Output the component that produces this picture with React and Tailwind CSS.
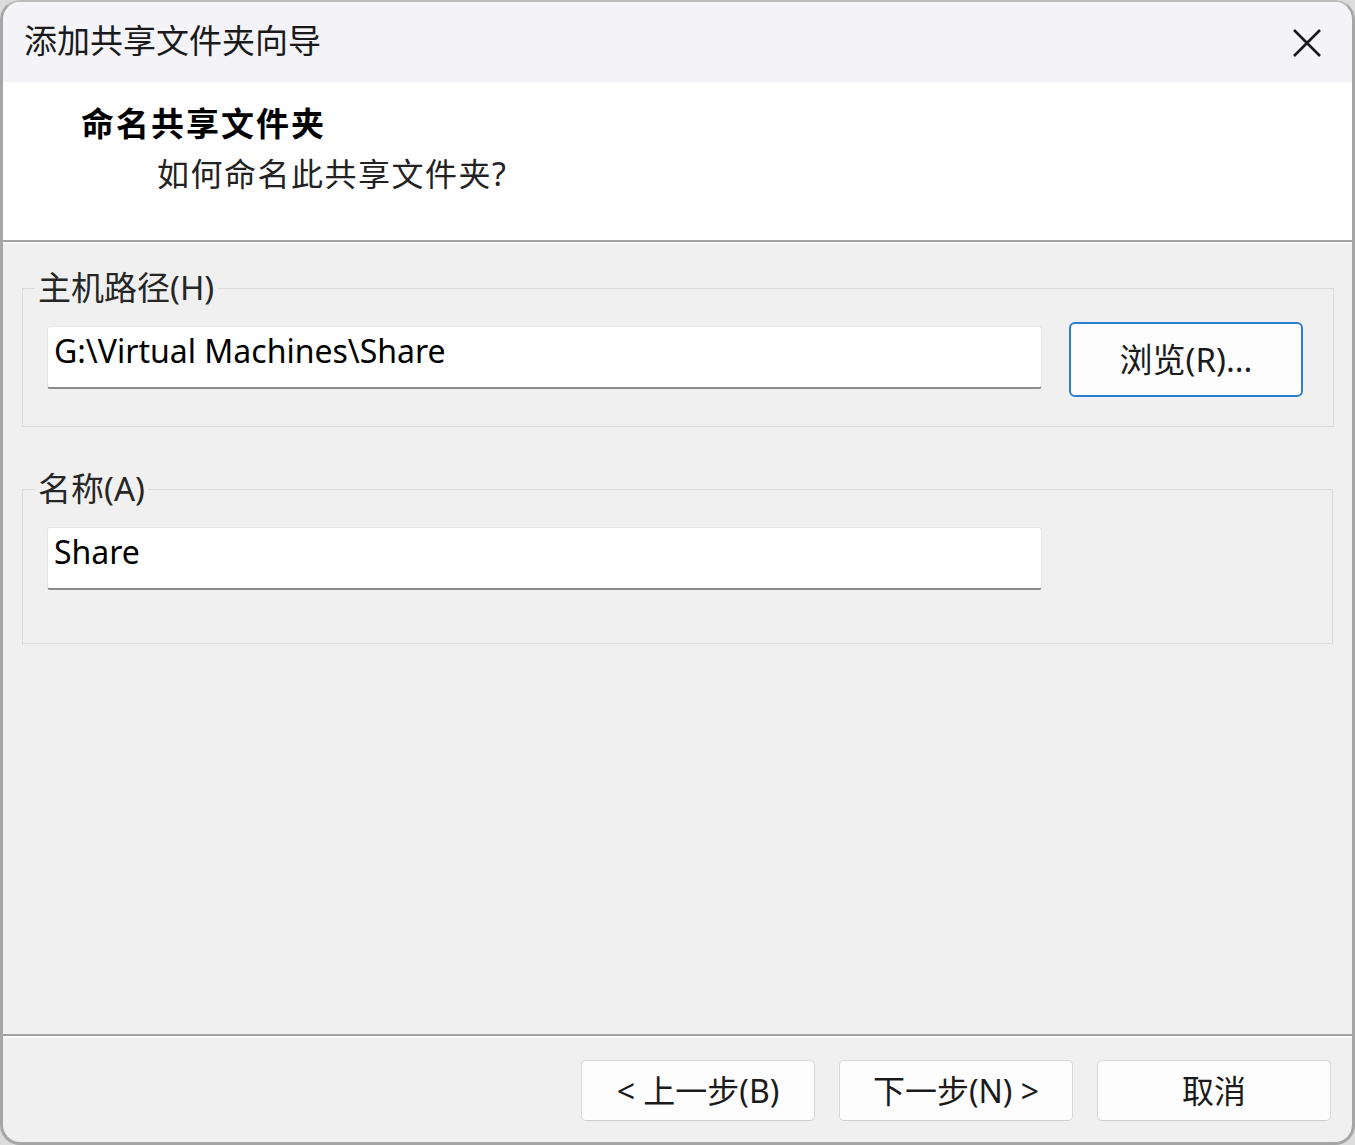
import { useState } from 'react';

const ui = "font-['Noto_Sans','Noto_Sans_CJK_SC',sans-serif]";

function GroupBox({ label, className, innerClass, children }) {
  return (
    <fieldset className={`border border-[#dadada] ${className}`}>
      <legend className="ml-[12px] px-[3px] text-[33px] leading-[36px] text-[#262626]">{label}</legend>
      <div className={innerClass}>{children}</div>
    </fieldset>
  );
}

function TextBox({ value, onChange }) {
  return (
    <input
      className={`${ui} w-[995px] h-[63px] bg-white border border-[#e6e6e6] border-b-2 border-b-[#8b8b8b] rounded-[3px] px-[6px] pb-[13px] text-[32px] text-black outline-none`}
      value={value}
      onChange={(e) => onChange(e.target.value)}
    />
  );
}

function FooterButton({ children }) {
  return (
    <button className="w-[234px] h-[61px] bg-[#fdfdfd] border border-[#d9d9d9] border-b-[#cfcfcf] rounded-[5px] text-[32px] text-[#1b1b1b]">
      {children}
    </button>
  );
}

export default function App() {
  const [hostPath, setHostPath] = useState('G:\\Virtual Machines\\Share');
  const [name, setName] = useState('Share');

  return (
    <div className={`${ui} w-[1355px] h-[1145px] bg-[#dcdcdc]`}>
      <div className="w-full h-full flex flex-col rounded-[20px] border-[3px] border-t-2 border-[#a6a6a6] border-t-[#bdbdbd] overflow-hidden bg-[#f0f0f0]">
        {/* title bar */}
        <div className="h-[80px] shrink-0 bg-[#f3f3f8] flex items-center justify-between pl-[21px] pr-[31px]">
          <span className="text-[33px] text-[#1a1a1a] pb-[2px]">添加共享文件夹向导</span>
          <svg width="28" height="28" viewBox="0 0 28 28" className="mt-[2px]">
            <path d="M1 1 L27 27 M27 1 L1 27" stroke="#1a1a1a" strokeWidth="2.6" fill="none" />
          </svg>
        </div>

        {/* header */}
        <div className="h-[158px] shrink-0 bg-white pt-[17px]">
          <div className="pl-[78px] text-[33px] leading-[50px] font-bold text-black tracking-[2px]">命名共享文件夹</div>
          <div className="pl-[154px] text-[32px] leading-[50px] text-[#222] tracking-[1.5px]">如何命名此共享文件夹?</div>
        </div>
        <div className="h-[2px] shrink-0 bg-[#a3a3a3]" />
        <div className="h-[2px] shrink-0 bg-[#f7f7f7]" />

        {/* body */}
        <div className="flex-1 px-[19px] pt-[26px]">
          <GroupBox label="主机路径(H)" innerClass="flex items-start gap-[27px] pl-[24px] pr-[30px] pt-[16px] pb-[29px]">
            <div className="mt-[4px]">
              <TextBox value={hostPath} onChange={setHostPath} />
            </div>
            <button className="w-[234px] h-[75px] bg-[#fdfdfd] border-2 border-[#2a7fd4] rounded-[6px] text-[33px] text-[#1b1b1b]">
              浏览(R)...
            </button>
          </GroupBox>

          <GroupBox label="名称(A)" className="mt-[44px]" innerClass="pl-[24px] pt-[20px] pb-[53px]">
            <TextBox value={name} onChange={setName} />
          </GroupBox>
        </div>

        {/* footer */}
        <div className="h-[2px] shrink-0 bg-[#a3a3a3]" />
        <div className="h-[2px] shrink-0 bg-[#fafafa]" />
        <div className="h-[104px] shrink-0 flex justify-end gap-[24px] pt-[22px] pr-[21px]">
          <FooterButton>&lt; 上一步(B)</FooterButton>
          <FooterButton>下一步(N) &gt;</FooterButton>
          <FooterButton>取消</FooterButton>
        </div>
      </div>
    </div>
  );
}
